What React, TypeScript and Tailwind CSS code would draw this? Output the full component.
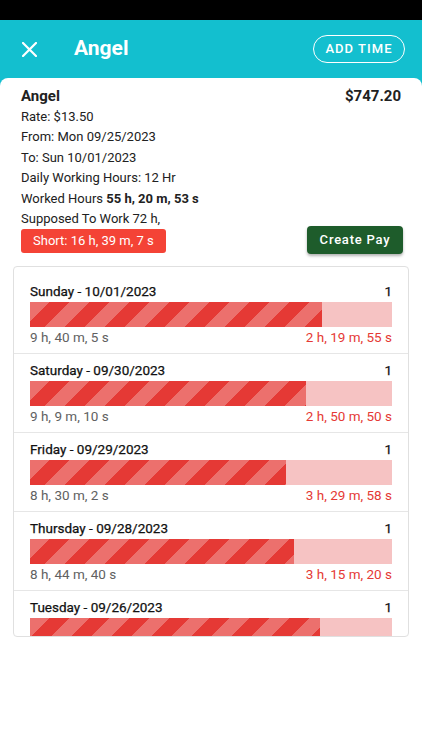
import React from 'react';

interface DayEntry {
    label: string;
    count: number;
    worked: string;
    short: string;
    pct: number;
}

const days: DayEntry[] = [
    { label: 'Sunday - 10/01/2023', count: 1, worked: '9 h, 40 m, 5 s', short: '2 h, 19 m, 55 s', pct: 80.57 },
    { label: 'Saturday - 09/30/2023', count: 1, worked: '9 h, 9 m, 10 s', short: '2 h, 50 m, 50 s', pct: 76.27 },
    { label: 'Friday - 09/29/2023', count: 1, worked: '8 h, 30 m, 2 s', short: '3 h, 29 m, 58 s', pct: 70.84 },
    { label: 'Thursday - 09/28/2023', count: 1, worked: '8 h, 44 m, 40 s', short: '3 h, 15 m, 20 s', pct: 72.87 },
    { label: 'Tuesday - 09/26/2023', count: 1, worked: '9 h, 37 m, 12 s', short: '2 h, 22 m, 48 s', pct: 80.17 },
];

function DayRow({ day }: { day: DayEntry }) {
    return (
        <div className="border-b border-[#e6e6e6] px-4 pt-2 pb-2">
            <div className="flex justify-between text-[13.5px] leading-4 text-[#111111] [-webkit-text-stroke:0.25px_#111111]">
                <span>{day.label}</span>
                <span>{day.count}</span>
            </div>
            <div className="mt-[3px] h-[25px] bg-[#f6c3c3]">
                <div
                    className="h-full bg-[#e53935] bg-[linear-gradient(135deg,rgba(255,255,255,0.28)_25%,transparent_25%,transparent_50%,rgba(255,255,255,0.28)_50%,rgba(255,255,255,0.28)_75%,transparent_75%,transparent)] bg-[length:40px_40px]"
                    style={{ width: `${day.pct}%` }}
                />
            </div>
            <div className="mt-[2px] flex justify-between text-[13.5px] leading-4">
                <span className="text-[#616161]">{day.worked}</span>
                <span className="text-[#e53935]">{day.short}</span>
            </div>
        </div>
    );
}

export default function App() {
    return (
        <div className="w-[422px] h-[750px] bg-white font-['Roboto','Noto_Sans',sans-serif] overflow-hidden">
            {/* status bar */}
            <div className="h-5 bg-black" />

            {/* top bar */}
            <div className="bg-[#13bfcf]">
                <div className="h-[58px] flex items-center pl-[22px] pr-[17px]">
                    <svg width="15" height="15" viewBox="0 0 15 15" className="shrink-0">
                        <path d="M1 1 L14 14 M14 1 L1 14" stroke="white" strokeWidth="2.2" strokeLinecap="square" />
                    </svg>
                    <span className="ml-[37px] text-[21px] font-bold text-white">Angel</span>
                    <button className="ml-auto h-7 w-[92px] rounded-full border-[1.5px] border-white text-[13px] font-medium tracking-[0.08em] text-white">
                        ADD TIME
                    </button>
                </div>

                <div className="rounded-t-lg bg-white pt-2 h-[672px]">
                    {/* summary */}
                    <div className="pl-[21px] pr-[21px] text-[13px] leading-[20.4px] text-[#212121]">
                        <div className="flex justify-between text-[15px] leading-5 font-bold">
                            <span>Angel</span>
                            <span>$747.20</span>
                        </div>
                        <div className="mt-px">Rate: $13.50</div>
                        <div>From: Mon 09/25/2023</div>
                        <div>To: Sun 10/01/2023</div>
                        <div>Daily Working Hours: 12 Hr</div>
                        <div>
                            Worked Hours <span className="font-bold">55 h, 20 m, 53 s</span>
                        </div>
                        <div>Supposed To Work 72 h,</div>
                        <div className="flex items-start justify-between">
                            <span className="mt-0 h-6 px-3 flex items-center rounded-[3px] bg-[#f44336] text-[13px] text-white">
                                Short: 16 h, 39 m, 7 s
                            </span>
                            <button className="-mt-[3px] mr-[-2px] h-7 w-[96px] rounded-[4px] bg-[#1e5c2b] text-[13px] font-medium tracking-[0.06em] text-white shadow-[0_2px_3px_rgba(0,0,0,0.3)]">
                                Create Pay
                            </button>
                        </div>
                    </div>

                    {/* day list */}
                    <div className="mx-[13px] mt-3 h-[371px] overflow-hidden rounded-[4px] border border-[#e0e0e0] pt-2">
                        {days.map((d) => (
                            <DayRow key={d.label} day={d} />
                        ))}
                    </div>
                </div>
            </div>
        </div>
    );
}
